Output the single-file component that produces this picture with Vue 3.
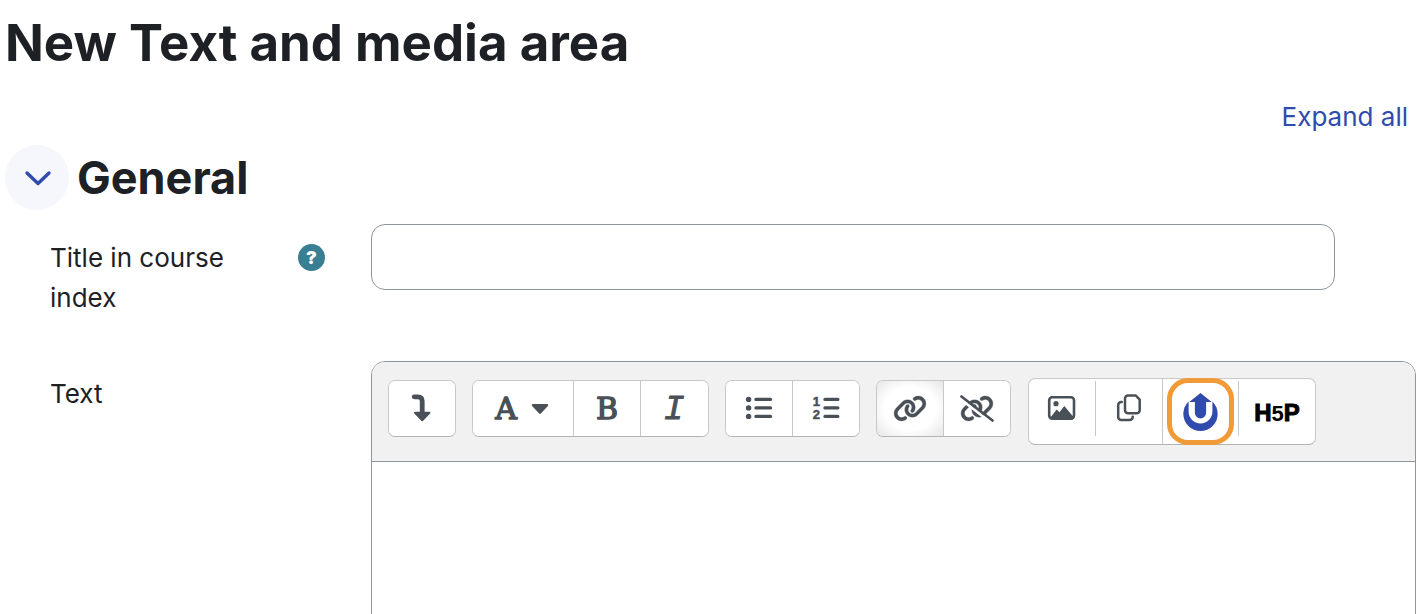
<script setup>
import { ref } from 'vue'

const title = ref('')
const linkPath =
  'M579.8 267.7c56.5-56.5 56.5-148 0-204.5c-50-50-128.8-56.5-186.3-15.4l-1.6 1.1c-14.4 10.3-17.7 30.3-7.4 44.6s30.3 17.7 44.6 7.4l1.6-1.1c32.1-22.9 76-19.3 103.8 8.6c31.5 31.5 31.5 82.5 0 114L422.3 334.8c-31.5 31.5-82.5 31.5-114 0c-27.9-27.9-31.5-71.8-8.6-103.8l1.1-1.6c10.3-14.4 6.9-34.4-7.4-44.6s-34.4-6.9-44.6 7.4l-1.1 1.6C206.5 251.2 213 330 263 380c56.5 56.5 148 56.5 204.5 0L579.8 267.7zM60.2 244.3c-56.5 56.5-56.5 148 0 204.5c50 50 128.8 56.5 186.3 15.4l1.6-1.1c14.4-10.3 17.7-30.3 7.4-44.6s-30.3-17.7-44.6-7.4l-1.6 1.1c-32.1 22.9-76 19.3-103.8-8.6C74 372 74 321 105.5 289.5L217.7 177.2c31.5-31.5 82.5-31.5 114 0c27.9 27.9 31.5 71.8 8.6 103.9l-1.1 1.6c-10.3 14.4-6.9 34.4 7.4 44.6s34.4 6.9 44.6-7.4l1.1-1.6C433.5 260.8 427 182 377 132c-56.5-56.5-148-56.5-204.5 0L60.2 244.3z'
</script>

<template>
  <main class="page">
    <h1>New Text and media area</h1>
    <div class="expand"><a href="#">Expand all</a></div>

    <form class="form" @submit.prevent>
      <div class="section-head">
        <button type="button" class="toggle" aria-label="General">
          <svg width="30" height="20" viewBox="0 0 30 20">
            <path d="M5 5 16 15.5 27 5" fill="none" stroke="currentColor" stroke-width="3.4" stroke-linecap="round" stroke-linejoin="round" />
          </svg>
        </button>
        <h2>General</h2>
      </div>

      <div class="row">
        <div class="label-cell">
          <label for="title">Title in course index</label>
          <button type="button" class="help" aria-label="Help">?</button>
        </div>
        <input id="title" v-model="title" class="title-input" type="text" />
      </div>

      <div class="row">
        <div class="label-cell">
          <label for="text">Text</label>
        </div>
        <div class="editor">
          <div class="toolbar" role="toolbar">
            <div class="group">
              <button type="button" aria-label="Show more buttons">
                <svg class="icon" viewBox="0 0 36 35">
                  <path d="M10.2 5.8H14q4.2 0 4.2 4.2V22" fill="none" stroke="currentColor" stroke-width="4.8" stroke-linecap="round" />
                  <path d="M11 21.8h14.4L18.2 29.2z" fill="currentColor" stroke="currentColor" stroke-width="2" stroke-linejoin="round" />
                </svg>
              </button>
            </div>

            <div class="group">
              <button type="button" class="styles" aria-label="Paragraph styles">
                <svg class="icon" viewBox="0 0 36 35"><text class="slab" x="18" y="28" text-anchor="middle">A</text></svg>
                <svg width="18" height="12" viewBox="0 0 18 12">
                  <path d="M2 2.2h14L9 9.6z" fill="currentColor" stroke="currentColor" stroke-width="2.4" stroke-linejoin="round" />
                </svg>
              </button>
              <button type="button" aria-label="Bold">
                <svg class="icon" viewBox="0 0 36 35"><text class="slab" x="18" y="28" text-anchor="middle">B</text></svg>
              </button>
              <button type="button" class="wide" aria-label="Italic">
                <svg class="icon" viewBox="0 0 36 35"><text class="slab italic" x="17" y="28" text-anchor="middle">I</text></svg>
              </button>
            </div>

            <div class="group">
              <button type="button" aria-label="Unordered list">
                <svg class="icon" viewBox="0 0 36 35">
                  <g fill="currentColor">
                    <circle cx="7.6" cy="8.4" r="2.7" />
                    <circle cx="7.6" cy="16.9" r="2.7" />
                    <circle cx="7.6" cy="25.4" r="2.7" />
                  </g>
                  <path d="M15 8.4h14.5M15 16.9h14.5M15 25.4h14.5" stroke="currentColor" stroke-width="3.4" stroke-linecap="round" />
                </svg>
              </button>
              <button type="button" aria-label="Ordered list">
                <svg class="icon" viewBox="0 0 36 35">
                  <text class="digit" x="8.4" y="14.6" text-anchor="middle">1</text>
                  <text class="digit" x="8.4" y="28.4" text-anchor="middle">2</text>
                  <path d="M17 8.4h12.8M17 16.9h12.8M17 25.4h12.8" stroke="currentColor" stroke-width="3.4" stroke-linecap="round" />
                </svg>
              </button>
            </div>

            <div class="group">
              <button type="button" class="pressed" aria-label="Link">
                <svg width="34" height="27" viewBox="0 0 640 512"><path :d="linkPath" fill="currentColor" stroke="currentColor" stroke-width="6" /></svg>
              </button>
              <button type="button" aria-label="Unlink">
                <svg width="34" height="27" viewBox="0 0 640 512">
                  <path :d="linkPath" fill="currentColor" stroke="currentColor" stroke-width="6" />
                  <path d="M10 78 570 511" stroke="#fff" stroke-width="50" />
                  <path d="M25 28 615 484" stroke="currentColor" stroke-width="50" stroke-linecap="round" />
                </svg>
              </button>
            </div>

            <div class="group tall">
              <button type="button" class="short" aria-label="Insert or edit image">
                <svg class="icon" viewBox="0 0 36 35">
                  <rect x="5.2" y="6.2" width="24.8" height="21.4" rx="3" fill="none" stroke="currentColor" stroke-width="2.6" />
                  <circle cx="12" cy="12.7" r="2.6" fill="currentColor" />
                  <path d="M6.4 26.4 12.7 18.4l2.8 2.8 4.8-6.2 8.8 10.6v1.4H6.4z" fill="currentColor" />
                </svg>
              </button>
              <button type="button" class="short" aria-label="Manage files">
                <svg class="icon" viewBox="0 0 36 35" fill="none" stroke="currentColor" stroke-width="2.5" stroke-linecap="round" stroke-linejoin="round">
                  <path d="M17 4.5h7.8l3.9 4.2v10.6a3 3 0 0 1-3 3H17a3 3 0 0 1-3-3V7.5a3 3 0 0 1 3-3z" />
                  <path d="M10.7 10.9h-.5a3 3 0 0 0-3 3V26a3 3 0 0 0 3 3h8.5a3 3 0 0 0 3-3v-.3" />
                </svg>
              </button>
              <button type="button" class="upload" aria-label="Upload media">
                <svg width="35" height="38" viewBox="99 112 104 115">
                  <circle cx="151" cy="175" r="52" fill="#2f4bad" />
                  <path d="M99 112h104v26h-16v30a36 36 0 0 1-72 0v-30H99z" fill="#fff" />
                  <path d="M151 112 185 139h-17v33a17 17 0 0 1-34 0v-33h-17z" fill="#2f4bad" />
                </svg>
              </button>
              <button type="button" class="short h5p" aria-label="Insert H5P">
                <svg width="46" height="35" viewBox="0 0 46 35">
                  <text class="logo" x="23" y="29.6" text-anchor="middle">H<tspan class="five">5</tspan>P</text>
                </svg>
              </button>
            </div>
          </div>
          <textarea id="text" class="body"></textarea>
        </div>
      </div>
    </form>
  </main>
</template>

<style>
body {
  margin: 0;
  background: #fff;
}
</style>

<style scoped>
* {
  box-sizing: border-box;
}
.page {
  height: 100vh;
  padding: 11px 7px 0 5px;
  overflow: hidden;
  font-family: Inter, "Liberation Sans", sans-serif;
  font-size: 26px;
  line-height: 40px;
  color: #1d2125;
}
h1,
h2 {
  margin: 0;
  font-weight: 700;
}
h1 {
  font-size: 51px;
  line-height: 64px;
}
h2 {
  font-size: 45px;
  line-height: 56px;
}
.expand {
  margin-top: 22px;
  padding-right: 8px;
  text-align: right;
}
.expand a {
  color: #2f4bad;
  text-decoration: none;
}
.section-head {
  display: flex;
  align-items: center;
  gap: 8px;
  margin-top: 8px;
}
.toggle {
  display: flex;
  align-items: center;
  justify-content: center;
  width: 64px;
  height: 65px;
  padding: 0;
  border: 0;
  border-radius: 50%;
  background: #f5f7fd;
  color: #2f4bad;
}
.row {
  display: grid;
  grid-template-columns: 275px minmax(0, 1fr);
  column-gap: 46px;
  margin: 14px 0 0 45px;
}
.row + .row {
  margin-top: 43px;
}
.label-cell {
  display: flex;
  justify-content: space-between;
  align-items: flex-start;
  padding-top: 14px;
}
.label-cell label {
  max-width: 200px;
}
.row + .row .label-cell {
  padding-top: 13px;
}
.help {
  width: 27px;
  height: 27px;
  margin-top: 6px;
  padding: 0;
  border: 0;
  border-radius: 50%;
  background: #387f94;
  color: #fff;
  font: 900 18px/27px Inter, sans-serif;
  text-align: center;
}
.title-input {
  width: calc(100% - 81px);
  height: 66px;
  padding: 0 20px;
  border: 1px solid #8f959e;
  border-radius: 14px;
  background: #fff;
  font: inherit;
}
.editor {
  border: 1px solid #8f959e;
  border-radius: 14px;
  overflow: hidden;
}
.toolbar {
  display: flex;
  align-items: flex-start;
  gap: 16px;
  padding: 16px;
  border-bottom: 1px solid #8f959e;
  background: #f1f1f1;
}
.group {
  display: flex;
  margin-top: 2px;
  border: 1px solid #c8c8c8;
  border-bottom-color: #b4b4b4;
  border-radius: 7px;
  background: #fff;
  overflow: hidden;
}
.group button {
  display: flex;
  align-items: center;
  justify-content: center;
  box-sizing: content-box;
  width: 66px;
  height: 55px;
  padding: 0;
  border: 0;
  background: #fff;
  color: #495057;
}
.group button + button {
  border-left: 1px solid #c8c8c8;
}
.group button.styles {
  width: 91px;
  padding-right: 9px;
  gap: 7px;
}
.group button.wide {
  width: 67px;
}
.group button.pressed {
  background: radial-gradient(ellipse, #fff 55%, #e6e6e6 100%);
}
.group.tall {
  margin: 0 0 0 1px;
  overflow: visible;
}
.group button.short {
  margin: 2px 0 8px;
  background: none;
}
.group button.upload {
  position: relative;
  width: 75px;
  height: 65px;
}
.upload::after {
  content: "";
  position: absolute;
  inset: -1px 4px;
  border: 5px solid #f19a38;
  border-radius: 21px;
}
.group button.h5p {
  width: 76px;
  color: #000;
}
.icon {
  width: 36px;
  height: 35px;
}
svg {
  overflow: visible;
}
svg text {
  fill: currentColor;
}
.slab {
  font: 400 30px "DejaVu Serif", serif;
  stroke: currentColor;
  stroke-width: 1.4;
  stroke-linejoin: round;
}
.italic {
  font: italic 400 35px "Liberation Mono", monospace;
  stroke-width: 0.8;
}
.digit {
  font: 900 13px "Liberation Sans", sans-serif;
  stroke: currentColor;
  stroke-width: 0.5;
}
.logo {
  font: 700 24px "Liberation Sans", sans-serif;
  stroke: currentColor;
  stroke-width: 1;
}
.five {
  font-size: 22px;
  stroke: none;
}
.body {
  display: block;
  width: 100%;
  height: 240px;
  padding: 16px;
  border: 0;
  resize: none;
  background: #fff;
  font: inherit;
}
</style>
